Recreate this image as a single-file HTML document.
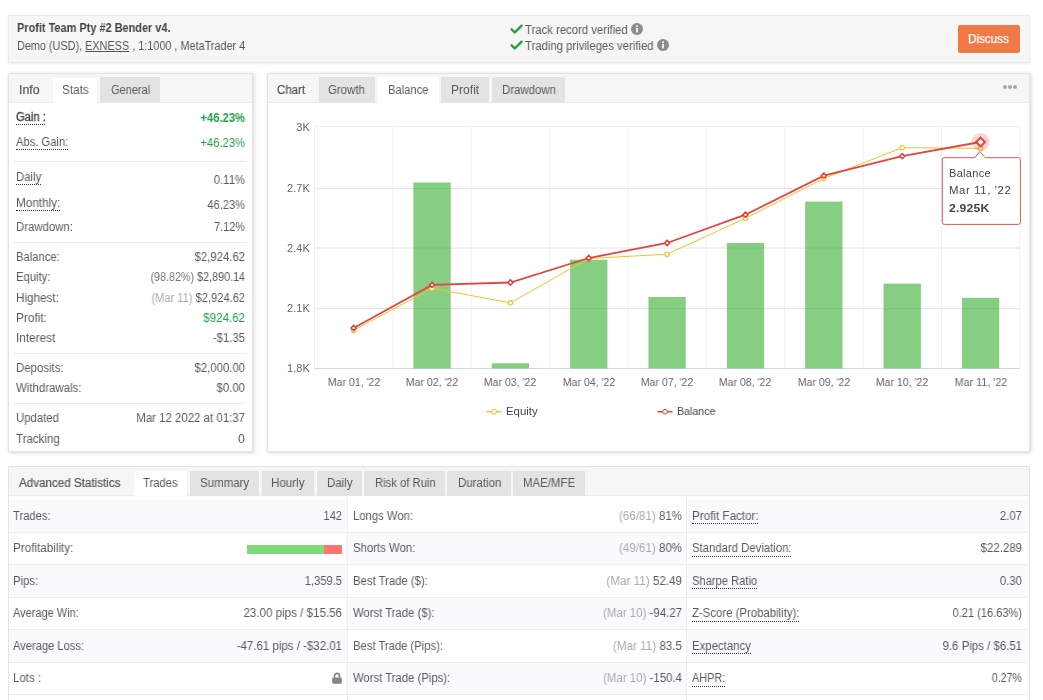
<!DOCTYPE html><html><head><meta charset="utf-8"><style>html,body{margin:0;padding:0;background:#fff;width:1043px;height:700px;overflow:hidden;position:relative}
.t{position:absolute;will-change:transform;font-family:"Liberation Sans",sans-serif;white-space:nowrap}
.r{position:absolute}
u{text-decoration:underline}
svg{display:block}
svg text{font-family:"Liberation Sans",sans-serif}</style></head><body>
<div class="r" style="left:8px;top:15px;width:1022.00px;height:48.00px;background:#f6f6f6;border:1px solid #ebebeb;box-sizing:border-box;box-shadow:0 1px 2px rgba(0,0,0,0.07);"></div>
<div class="t" style="top:22px;font-size:12px;line-height:12px;color:#444;font-weight:bold;left:17.3px;transform:scaleX(0.9109);transform-origin:left;"><span>Profit Team Pty #2 Bender v4.</span></div>
<div class="t" style="top:40px;font-size:12px;line-height:12px;color:#555;left:17.3px;transform:scaleX(0.9044);transform-origin:left;"><span>Demo (USD), <u>EXNESS</u> , 1:1000 , MetaTrader 4</span></div>
<div class="r" style="left:510px;top:24px;width:13px;height:11px"><svg width="13" height="11" viewBox="0 0 13 11"><path d="M1.6 5.3 L4.8 8.5 L11.6 1.7" fill="none" stroke="#1fa33a" stroke-width="2.4" stroke-linecap="round" stroke-linejoin="round"/></svg></div>
<div class="r" style="left:510px;top:40px;width:13px;height:11px"><svg width="13" height="11" viewBox="0 0 13 11"><path d="M1.6 5.3 L4.8 8.5 L11.6 1.7" fill="none" stroke="#1fa33a" stroke-width="2.4" stroke-linecap="round" stroke-linejoin="round"/></svg></div>
<div class="t" style="top:24px;font-size:12px;line-height:12px;color:#5a5a5a;left:525.4px;transform:scaleX(0.9429);transform-origin:left;"><span>Track record verified</span></div>
<div class="t" style="top:40px;font-size:12px;line-height:12px;color:#5a5a5a;left:525.4px;transform:scaleX(0.9435);transform-origin:left;"><span>Trading privileges verified</span></div>
<div class="r" style="left:631px;top:23px;width:12px;height:12px"><svg width="12" height="12" viewBox="0 0 12 12"><circle cx="6" cy="6" r="6" fill="#8c8c8c"/><rect x="5.1" y="5" width="1.8" height="4.5" fill="#f6f6f6"/><circle cx="6" cy="3.3" r="1" fill="#f6f6f6"/></svg></div>
<div class="r" style="left:657px;top:39px;width:12px;height:12px"><svg width="12" height="12" viewBox="0 0 12 12"><circle cx="6" cy="6" r="6" fill="#8c8c8c"/><rect x="5.1" y="5" width="1.8" height="4.5" fill="#f6f6f6"/><circle cx="6" cy="3.3" r="1" fill="#f6f6f6"/></svg></div>
<div class="r" style="left:958px;top:25px;width:61.50px;height:28.00px;background:#f07a46;border-radius:2px;"></div>
<div class="t" style="top:33px;font-size:12px;line-height:12px;color:#fff;-webkit-text-stroke:0.25px #fff;left:968.0px;transform:scaleX(0.9711);transform-origin:left;"><span>Discuss</span></div>
<div class="r" style="left:8px;top:73px;width:245.00px;height:379.00px;background:#fff;border:1px solid #e4e4e4;box-sizing:border-box;box-shadow:1px 1px 4px rgba(0,0,0,0.17);"></div>
<div class="r" style="left:9px;top:74px;width:243.00px;height:28.50px;background:#f6f6f6;border-bottom:1px solid #ececec;box-sizing:border-box;"></div>
<div class="r" style="left:52.6px;top:78px;width:44.90px;height:24.50px;background:#fff;"></div>
<div class="r" style="left:100px;top:77.3px;width:60.00px;height:25.20px;background:#e3e3e3;"></div>
<div class="t" style="top:84px;font-size:12px;line-height:12px;color:#555;-webkit-text-stroke:0.2px currentColor;left:18.5px;transform:scaleX(1.0342);transform-origin:left;"><span>Info</span></div>
<div class="t" style="top:84px;font-size:12px;line-height:12px;color:#5a5a5a;left:61.6px;transform:scaleX(0.9796);transform-origin:left;"><span>Stats</span></div>
<div class="t" style="top:84px;font-size:12px;line-height:12px;color:#5a5a5a;left:110.5px;transform:scaleX(0.9180);transform-origin:left;"><span>General</span></div>
<div class="t" style="top:111px;font-size:12px;line-height:12px;color:#444;-webkit-text-stroke:0.35px #444;left:15.8px;transform:scaleX(0.9308);transform-origin:left;"><span>Gain :</span></div>
<div class="r" style="left:16.3px;top:124.2px;width:28.70px;height:0;border-top:1px dotted #333"></div>
<div class="t" style="top:112px;font-size:12px;line-height:12px;color:#22a045;font-weight:bold;left:-355.20px;width:600px;text-align:right;transform:scaleX(0.9346);transform-origin:right;"><span>+46.23%</span></div>
<div class="t" style="top:136px;font-size:12px;line-height:12px;color:#5a5a5a;left:15.8px;transform:scaleX(0.9334);transform-origin:left;"><span>Abs. Gain:</span></div>
<div class="r" style="left:16.3px;top:148.5px;width:51.70px;height:0;border-top:1px dotted #333"></div>
<div class="t" style="top:137px;font-size:12px;line-height:12px;color:#22a045;left:-355.20px;width:600px;text-align:right;transform:scaleX(0.9346);transform-origin:right;"><span>+46.23%</span></div>
<div class="r" style="left:13.7px;top:161.2px;width:233.30px;height:1.00px;background:#ebebeb;"></div>
<div class="t" style="top:171px;font-size:12px;line-height:12px;color:#5a5a5a;left:15.8px;transform:scaleX(0.9448);transform-origin:left;"><span>Daily</span></div>
<div class="r" style="left:16.3px;top:183.8px;width:24.70px;height:0;border-top:1px dotted #333"></div>
<div class="t" style="top:174px;font-size:12px;line-height:12px;color:#5a5a5a;left:-355.20px;width:600px;text-align:right;transform:scaleX(0.9414);transform-origin:right;"><span>0.11%</span></div>
<div class="t" style="top:197px;font-size:12px;line-height:12px;color:#5a5a5a;left:15.8px;transform:scaleX(0.9788);transform-origin:left;"><span>Monthly:</span></div>
<div class="r" style="left:16.3px;top:209.5px;width:43.70px;height:0;border-top:1px dotted #333"></div>
<div class="t" style="top:199px;font-size:12px;line-height:12px;color:#5a5a5a;left:-355.20px;width:600px;text-align:right;transform:scaleX(0.9262);transform-origin:right;"><span>46.23%</span></div>
<div class="t" style="top:221px;font-size:12px;line-height:12px;color:#5a5a5a;left:15.8px;transform:scaleX(0.9478);transform-origin:left;"><span>Drawdown:</span></div>
<div class="t" style="top:221px;font-size:12px;line-height:12px;color:#5a5a5a;left:-355.20px;width:600px;text-align:right;transform:scaleX(0.9109);transform-origin:right;"><span>7.12%</span></div>
<div class="r" style="left:13.7px;top:241.8px;width:233.30px;height:1.00px;background:#ebebeb;"></div>
<div class="t" style="top:251px;font-size:12px;line-height:12px;color:#5a5a5a;left:15.8px;transform:scaleX(0.9357);transform-origin:left;"><span>Balance:</span></div>
<div class="t" style="top:251px;font-size:12px;line-height:12px;color:#5a5a5a;left:-355.20px;width:600px;text-align:right;transform:scaleX(0.9440);transform-origin:right;"><span>$2,924.62</span></div>
<div class="t" style="top:271px;font-size:12px;line-height:12px;color:#5a5a5a;left:15.8px;transform:scaleX(0.9404);transform-origin:left;"><span>Equity:</span></div>
<div class="t" style="top:271px;font-size:12px;line-height:12px;color:#5a5a5a;left:-355.20px;width:600px;text-align:right;transform:scaleX(0.8964);transform-origin:right;"><span><span style="color:#777">(98.82%)</span> $2,890.14</span></div>
<div class="t" style="top:292px;font-size:12px;line-height:12px;color:#5a5a5a;left:15.8px;transform:scaleX(0.9743);transform-origin:left;"><span>Highest:</span></div>
<div class="t" style="top:292px;font-size:12px;line-height:12px;color:#5a5a5a;left:-355.20px;width:600px;text-align:right;transform:scaleX(0.9242);transform-origin:right;"><span><span style="color:#aaa">(Mar 11)</span> $2,924.62</span></div>
<div class="t" style="top:312px;font-size:12px;line-height:12px;color:#5a5a5a;left:15.8px;transform:scaleX(0.9827);transform-origin:left;"><span>Profit:</span></div>
<div class="t" style="top:312px;font-size:12px;line-height:12px;color:#22a045;left:-355.20px;width:600px;text-align:right;transform:scaleX(0.9610);transform-origin:right;"><span>$924.62</span></div>
<div class="t" style="top:332px;font-size:12px;line-height:12px;color:#5a5a5a;left:15.8px;transform:scaleX(0.9817);transform-origin:left;"><span>Interest</span></div>
<div class="t" style="top:332px;font-size:12px;line-height:12px;color:#5a5a5a;left:-355.20px;width:600px;text-align:right;transform:scaleX(0.9462);transform-origin:right;"><span>-$1.35</span></div>
<div class="r" style="left:13.7px;top:353.2px;width:233.30px;height:1.00px;background:#ebebeb;"></div>
<div class="t" style="top:362px;font-size:12px;line-height:12px;color:#5a5a5a;left:15.8px;transform:scaleX(0.9514);transform-origin:left;"><span>Deposits:</span></div>
<div class="t" style="top:362px;font-size:12px;line-height:12px;color:#5a5a5a;left:-355.20px;width:600px;text-align:right;transform:scaleX(0.9459);transform-origin:right;"><span>$2,000.00</span></div>
<div class="t" style="top:382px;font-size:12px;line-height:12px;color:#5a5a5a;left:15.8px;transform:scaleX(0.9536);transform-origin:left;"><span>Withdrawals:</span></div>
<div class="t" style="top:382px;font-size:12px;line-height:12px;color:#5a5a5a;left:-355.20px;width:600px;text-align:right;transform:scaleX(0.9490);transform-origin:right;"><span>$0.00</span></div>
<div class="r" style="left:13.7px;top:402.8px;width:233.30px;height:1.00px;background:#ebebeb;"></div>
<div class="t" style="top:412px;font-size:12px;line-height:12px;color:#5a5a5a;left:15.8px;transform:scaleX(0.9455);transform-origin:left;"><span>Updated</span></div>
<div class="t" style="top:412px;font-size:12px;line-height:12px;color:#5a5a5a;left:-355.20px;width:600px;text-align:right;transform:scaleX(0.9536);transform-origin:right;"><span>Mar 12 2022 at 01:37</span></div>
<div class="t" style="top:433px;font-size:12px;line-height:12px;color:#5a5a5a;left:15.8px;transform:scaleX(0.9588);transform-origin:left;"><span>Tracking</span></div>
<div class="t" style="top:433px;font-size:12px;line-height:12px;color:#5a5a5a;left:-355.20px;width:600px;text-align:right;transform:scaleX(1.0318);transform-origin:right;"><span>0</span></div>
<div class="r" style="left:267px;top:73px;width:763.00px;height:379.00px;background:#fff;border:1px solid #e4e4e4;box-sizing:border-box;box-shadow:1px 1px 4px rgba(0,0,0,0.17);"></div>
<div class="r" style="left:268px;top:74px;width:761.00px;height:28.50px;background:#f6f6f6;border-bottom:1px solid #ececec;box-sizing:border-box;"></div>
<div class="r" style="left:319px;top:77px;width:56.20px;height:25.50px;background:#e3e3e3;"></div>
<div class="r" style="left:378px;top:77px;width:60.50px;height:25.50px;background:#fff;"></div>
<div class="r" style="left:441px;top:77px;width:48.20px;height:25.50px;background:#e3e3e3;"></div>
<div class="r" style="left:491.8px;top:77px;width:73.60px;height:25.50px;background:#e3e3e3;"></div>
<div class="t" style="top:84px;font-size:12px;line-height:12px;color:#555;-webkit-text-stroke:0.2px currentColor;left:277.3px;transform:scaleX(0.9576);transform-origin:left;"><span>Chart</span></div>
<div class="t" style="top:84px;font-size:12px;line-height:12px;color:#5a5a5a;left:328.1px;transform:scaleX(0.9538);transform-origin:left;"><span>Growth</span></div>
<div class="t" style="top:84px;font-size:12px;line-height:12px;color:#5a5a5a;left:388.2px;transform:scaleX(0.9314);transform-origin:left;"><span>Balance</span></div>
<div class="t" style="top:84px;font-size:12px;line-height:12px;color:#5a5a5a;left:450.8px;transform:scaleX(1.0066);transform-origin:left;"><span>Profit</span></div>
<div class="t" style="top:84px;font-size:12px;line-height:12px;color:#5a5a5a;left:501.6px;transform:scaleX(0.9506);transform-origin:left;"><span>Drawdown</span></div>
<div class="r" style="left:1002.6px;top:84.8px;width:4px;height:4px;border-radius:2px;background:#a5a5a5"></div>
<div class="r" style="left:1007.6px;top:84.8px;width:4px;height:4px;border-radius:2px;background:#a5a5a5"></div>
<div class="r" style="left:1012.6px;top:84.8px;width:4px;height:4px;border-radius:2px;background:#a5a5a5"></div>
<svg class="r" style="left:0;top:0" width="1043" height="700" viewBox="0 0 1043 700"><line x1="314.5" y1="126.5" x2="1019.7" y2="126.5" stroke="#f0f0f0" stroke-width="1"/><line x1="314.5" y1="188.5" x2="1019.7" y2="188.5" stroke="#f0f0f0" stroke-width="1"/><line x1="314.5" y1="248" x2="1019.7" y2="248" stroke="#f0f0f0" stroke-width="1"/><line x1="314.5" y1="308.5" x2="1019.7" y2="308.5" stroke="#f0f0f0" stroke-width="1"/><line x1="314.50" y1="126.5" x2="314.50" y2="368.5" stroke="#f0f0f0" stroke-width="1"/><line x1="392.86" y1="126.5" x2="392.86" y2="368.5" stroke="#f0f0f0" stroke-width="1"/><line x1="471.22" y1="126.5" x2="471.22" y2="368.5" stroke="#f0f0f0" stroke-width="1"/><line x1="549.58" y1="126.5" x2="549.58" y2="368.5" stroke="#f0f0f0" stroke-width="1"/><line x1="627.94" y1="126.5" x2="627.94" y2="368.5" stroke="#f0f0f0" stroke-width="1"/><line x1="706.30" y1="126.5" x2="706.30" y2="368.5" stroke="#f0f0f0" stroke-width="1"/><line x1="784.66" y1="126.5" x2="784.66" y2="368.5" stroke="#f0f0f0" stroke-width="1"/><line x1="863.02" y1="126.5" x2="863.02" y2="368.5" stroke="#f0f0f0" stroke-width="1"/><line x1="941.38" y1="126.5" x2="941.38" y2="368.5" stroke="#f0f0f0" stroke-width="1"/><line x1="1019.74" y1="126.5" x2="1019.74" y2="368.5" stroke="#f0f0f0" stroke-width="1"/><line x1="314.5" y1="368.5" x2="1019.7" y2="368.5" stroke="#ccd6eb" stroke-width="1"/><rect x="413.39" y="182.5" width="37.3" height="186.0" fill="#86ce81"/><rect x="491.75" y="363.3" width="37.3" height="5.2" fill="#86ce81"/><rect x="570.11" y="259.7" width="37.3" height="108.8" fill="#86ce81"/><rect x="648.47" y="297" width="37.3" height="71.5" fill="#86ce81"/><rect x="726.83" y="243" width="37.3" height="125.5" fill="#86ce81"/><rect x="805.19" y="201.6" width="37.3" height="166.9" fill="#86ce81"/><rect x="883.55" y="283.6" width="37.3" height="84.9" fill="#86ce81"/><rect x="961.91" y="297.8" width="37.3" height="70.7" fill="#86ce81"/><line x1="314.5" y1="188.5" x2="1019.7" y2="188.5" stroke="rgba(0,0,0,0.05)" stroke-width="1"/><line x1="314.5" y1="248" x2="1019.7" y2="248" stroke="rgba(0,0,0,0.05)" stroke-width="1"/><line x1="314.5" y1="308.5" x2="1019.7" y2="308.5" stroke="rgba(0,0,0,0.05)" stroke-width="1"/><polyline points="353.68,330.4 432.04,288.3 510.40,302.8 588.76,258.5 667.12,254.2 745.48,218.3 823.84,178.5 902.20,147.7 980.56,148.4" fill="none" stroke="#f5c02b" stroke-width="1"/><circle cx="353.68" cy="330.4" r="2.2" fill="#fff" stroke="#f5c02b" stroke-width="1.2"/><circle cx="432.04" cy="288.3" r="2.2" fill="#fff" stroke="#f5c02b" stroke-width="1.2"/><circle cx="510.40" cy="302.8" r="2.2" fill="#fff" stroke="#f5c02b" stroke-width="1.2"/><circle cx="588.76" cy="258.5" r="2.2" fill="#fff" stroke="#f5c02b" stroke-width="1.2"/><circle cx="667.12" cy="254.2" r="2.2" fill="#fff" stroke="#f5c02b" stroke-width="1.2"/><circle cx="745.48" cy="218.3" r="2.2" fill="#fff" stroke="#f5c02b" stroke-width="1.2"/><circle cx="823.84" cy="178.5" r="2.2" fill="#fff" stroke="#f5c02b" stroke-width="1.2"/><circle cx="902.20" cy="147.7" r="2.2" fill="#fff" stroke="#f5c02b" stroke-width="1.2"/><circle cx="980.56" cy="148.4" r="2.2" fill="#fff" stroke="#f5c02b" stroke-width="1.2"/><polyline points="353.68,328 432.04,284.9 510.40,282.5 588.76,258 667.12,243 745.48,214.7 823.84,175.7 902.20,156.2 980.56,142" fill="none" stroke="#e2463f" stroke-width="1.8"/><path d="M353.68 325.40 L356.28 328 L353.68 330.60 L351.08 328 Z" fill="#fff" stroke="#e0433b" stroke-width="1.5"/><path d="M432.04 282.30 L434.64 284.9 L432.04 287.50 L429.44 284.9 Z" fill="#fff" stroke="#e0433b" stroke-width="1.5"/><path d="M510.40 279.90 L513.00 282.5 L510.40 285.10 L507.80 282.5 Z" fill="#fff" stroke="#e0433b" stroke-width="1.5"/><path d="M588.76 255.40 L591.36 258 L588.76 260.60 L586.16 258 Z" fill="#fff" stroke="#e0433b" stroke-width="1.5"/><path d="M667.12 240.40 L669.72 243 L667.12 245.60 L664.52 243 Z" fill="#fff" stroke="#e0433b" stroke-width="1.5"/><path d="M745.48 212.10 L748.08 214.7 L745.48 217.30 L742.88 214.7 Z" fill="#fff" stroke="#e0433b" stroke-width="1.5"/><path d="M823.84 173.10 L826.44 175.7 L823.84 178.30 L821.24 175.7 Z" fill="#fff" stroke="#e0433b" stroke-width="1.5"/><path d="M902.20 153.60 L904.80 156.2 L902.20 158.80 L899.60 156.2 Z" fill="#fff" stroke="#e0433b" stroke-width="1.5"/><circle cx="980.56" cy="142" r="9" fill="rgba(224,67,59,0.22)"/><path d="M980.56 137.6 L984.96 142 L980.56 146.4 L976.16 142 Z" fill="#fff" stroke="#e0433b" stroke-width="2"/><path d="M944.3 157.7 L974.8 157.7 L979.5 151.7 L985.3 157.7 L1018.4 157.7 Q1020.4 157.7 1020.4 159.7 L1020.4 222.4 Q1020.4 224.4 1018.4 224.4 L944.3 224.4 Q942.3 224.4 942.3 222.4 L942.3 159.7 Q942.3 157.7 944.3 157.7 Z" fill="rgba(255,255,255,0.95)" stroke="#e0574f" stroke-width="1"/></svg>
<div class="t" style="top:122px;font-size:11px;line-height:11px;color:#666;letter-spacing:0.1px;left:-290.30px;width:600px;text-align:right;"><span>3K</span></div>
<div class="t" style="top:183px;font-size:11px;line-height:11px;color:#666;letter-spacing:0.1px;left:-290.30px;width:600px;text-align:right;"><span>2.7K</span></div>
<div class="t" style="top:243px;font-size:11px;line-height:11px;color:#666;letter-spacing:0.1px;left:-290.30px;width:600px;text-align:right;"><span>2.4K</span></div>
<div class="t" style="top:303px;font-size:11px;line-height:11px;color:#666;letter-spacing:0.1px;left:-290.30px;width:600px;text-align:right;"><span>2.1K</span></div>
<div class="t" style="top:363px;font-size:11px;line-height:11px;color:#666;letter-spacing:0.1px;left:-290.30px;width:600px;text-align:right;"><span>1.8K</span></div>
<div class="t" style="top:377px;font-size:11px;line-height:11px;color:#666;left:53.68px;width:600px;text-align:center;transform:scaleX(0.9600);transform-origin:center;"><span>Mar 01, '22</span></div>
<div class="t" style="top:377px;font-size:11px;line-height:11px;color:#666;left:132.04px;width:600px;text-align:center;transform:scaleX(0.9600);transform-origin:center;"><span>Mar 02, '22</span></div>
<div class="t" style="top:377px;font-size:11px;line-height:11px;color:#666;left:210.40px;width:600px;text-align:center;transform:scaleX(0.9600);transform-origin:center;"><span>Mar 03, '22</span></div>
<div class="t" style="top:377px;font-size:11px;line-height:11px;color:#666;left:288.76px;width:600px;text-align:center;transform:scaleX(0.9600);transform-origin:center;"><span>Mar 04, '22</span></div>
<div class="t" style="top:377px;font-size:11px;line-height:11px;color:#666;left:367.12px;width:600px;text-align:center;transform:scaleX(0.9600);transform-origin:center;"><span>Mar 07, '22</span></div>
<div class="t" style="top:377px;font-size:11px;line-height:11px;color:#666;left:445.48px;width:600px;text-align:center;transform:scaleX(0.9600);transform-origin:center;"><span>Mar 08, '22</span></div>
<div class="t" style="top:377px;font-size:11px;line-height:11px;color:#666;left:523.84px;width:600px;text-align:center;transform:scaleX(0.9600);transform-origin:center;"><span>Mar 09, '22</span></div>
<div class="t" style="top:377px;font-size:11px;line-height:11px;color:#666;left:602.20px;width:600px;text-align:center;transform:scaleX(0.9600);transform-origin:center;"><span>Mar 10, '22</span></div>
<div class="t" style="top:377px;font-size:11px;line-height:11px;color:#666;left:680.56px;width:600px;text-align:center;transform:scaleX(0.9745);transform-origin:center;"><span>Mar 11, '22</span></div>
<svg class="r" style="left:486px;top:406px" width="16" height="12"><line x1="0.5" y1="5.7" x2="15.5" y2="5.7" stroke="#f5c02b" stroke-width="1.5"/><circle cx="8" cy="5.7" r="2.5" fill="#fff" stroke="#f5c02b" stroke-width="1"/></svg>
<div class="t" style="top:406px;font-size:11px;line-height:11px;color:#444;left:506.3px;transform:scaleX(1.0367);transform-origin:left;"><span>Equity</span></div>
<svg class="r" style="left:657px;top:406px" width="16" height="12"><line x1="0.5" y1="5.7" x2="15.5" y2="5.7" stroke="#e0433b" stroke-width="1.5"/><circle cx="8" cy="5.7" r="2.3" fill="#fff" stroke="#e0433b" stroke-width="1"/></svg>
<div class="t" style="top:406px;font-size:11px;line-height:11px;color:#444;left:677.1px;transform:scaleX(0.9631);transform-origin:left;"><span>Balance</span></div>
<div class="t" style="top:168px;font-size:11px;line-height:11px;color:#444;letter-spacing:0.3px;left:949.2px;transform:scaleX(0.9890);transform-origin:left;"><span>Balance</span></div>
<div class="t" style="top:185px;font-size:11px;line-height:11px;color:#444;letter-spacing:0.6px;left:949.2px;transform:scaleX(1.0336);transform-origin:left;"><span>Mar 11, '22</span></div>
<div class="t" style="top:203px;font-size:11px;line-height:11px;color:#444;letter-spacing:0.2px;font-weight:bold;left:949.2px;transform:scaleX(1.1071);transform-origin:left;"><span>2.925K</span></div>
<div class="r" style="left:8px;top:466px;width:1022.00px;height:294.00px;background:#fff;border:1px solid #e4e4e4;box-sizing:border-box;"></div>
<div class="r" style="left:9px;top:467px;width:1020.00px;height:29.00px;background:#f6f6f6;border-bottom:1px solid #ececec;box-sizing:border-box;"></div>
<div class="t" style="top:477px;font-size:12px;line-height:12px;color:#555;-webkit-text-stroke:0.2px currentColor;left:19.0px;transform:scaleX(0.9683);transform-origin:left;"><span>Advanced Statistics</span></div>
<div class="r" style="left:134.2px;top:471px;width:52.80px;height:25.00px;background:#fff;"></div>
<div class="t" style="top:477px;font-size:12px;line-height:12px;color:#5a5a5a;left:143.1px;transform:scaleX(0.9348);transform-origin:left;"><span>Trades</span></div>
<div class="r" style="left:190.3px;top:471px;width:69.10px;height:25.00px;background:#e3e3e3;"></div>
<div class="t" style="top:477px;font-size:12px;line-height:12px;color:#5a5a5a;left:200.2px;transform:scaleX(0.9582);transform-origin:left;"><span>Summary</span></div>
<div class="r" style="left:261.7px;top:471px;width:52.80px;height:25.00px;background:#e3e3e3;"></div>
<div class="t" style="top:477px;font-size:12px;line-height:12px;color:#5a5a5a;left:271.3px;transform:scaleX(0.9658);transform-origin:left;"><span>Hourly</span></div>
<div class="r" style="left:316.9px;top:471px;width:45.40px;height:25.00px;background:#e3e3e3;"></div>
<div class="t" style="top:477px;font-size:12px;line-height:12px;color:#5a5a5a;left:327.1px;transform:scaleX(0.9561);transform-origin:left;"><span>Daily</span></div>
<div class="r" style="left:363.8px;top:471px;width:81.00px;height:25.00px;background:#e3e3e3;"></div>
<div class="t" style="top:477px;font-size:12px;line-height:12px;color:#5a5a5a;left:374.7px;transform:scaleX(0.9384);transform-origin:left;"><span>Risk of Ruin</span></div>
<div class="r" style="left:446.7px;top:471px;width:64.40px;height:25.00px;background:#e3e3e3;"></div>
<div class="t" style="top:477px;font-size:12px;line-height:12px;color:#5a5a5a;left:457.5px;transform:scaleX(0.9546);transform-origin:left;"><span>Duration</span></div>
<div class="r" style="left:513.3px;top:471px;width:72.10px;height:25.00px;background:#e3e3e3;"></div>
<div class="t" style="top:477px;font-size:12px;line-height:12px;color:#5a5a5a;left:522.9px;transform:scaleX(0.9530);transform-origin:left;"><span>MAE/MFE</span></div>
<div class="r" style="left:9px;top:500.0px;width:338.60px;height:32.58px;background:#f8fafc;border-bottom:1px solid #ebeef0;box-sizing:border-box;"></div>
<div class="t" style="top:510px;font-size:12px;line-height:12px;color:#5a5a5a;left:13.2px;transform:scaleX(0.9317);transform-origin:left;"><span>Trades:</span></div>
<div class="t" style="top:510px;font-size:12px;line-height:12px;color:#5a5a5a;left:-257.80px;width:600px;text-align:right;transform:scaleX(0.9285);transform-origin:right;"><span>142</span></div>
<div class="r" style="left:9px;top:532.58px;width:338.60px;height:32.58px;background:#fff;border-bottom:1px solid #ebeef0;box-sizing:border-box;"></div>
<div class="t" style="top:542px;font-size:12px;line-height:12px;color:#5a5a5a;left:13.2px;transform:scaleX(0.9721);transform-origin:left;"><span>Profitability:</span></div>
<div class="r" style="left:247px;top:545px;width:77.20px;height:9.00px;background:#80d97a;"></div>
<div class="r" style="left:324.2px;top:545px;width:18.00px;height:9.00px;background:#fb7575;"></div>
<div class="r" style="left:9px;top:565.16px;width:338.60px;height:32.58px;background:#f8fafc;border-bottom:1px solid #ebeef0;box-sizing:border-box;"></div>
<div class="t" style="top:575px;font-size:12px;line-height:12px;color:#5a5a5a;left:13.2px;transform:scaleX(0.9443);transform-origin:left;"><span>Pips:</span></div>
<div class="t" style="top:575px;font-size:12px;line-height:12px;color:#5a5a5a;left:-257.80px;width:600px;text-align:right;transform:scaleX(0.9314);transform-origin:right;"><span>1,359.5</span></div>
<div class="r" style="left:9px;top:597.74px;width:338.60px;height:32.58px;background:#fff;border-bottom:1px solid #ebeef0;box-sizing:border-box;"></div>
<div class="t" style="top:607px;font-size:12px;line-height:12px;color:#5a5a5a;left:13.2px;transform:scaleX(0.9163);transform-origin:left;"><span>Average Win:</span></div>
<div class="t" style="top:607px;font-size:12px;line-height:12px;color:#5a5a5a;left:-257.80px;width:600px;text-align:right;transform:scaleX(0.9648);transform-origin:right;"><span>23.00 pips / $15.56</span></div>
<div class="r" style="left:9px;top:630.3199999999999px;width:338.60px;height:32.58px;background:#f8fafc;border-bottom:1px solid #ebeef0;box-sizing:border-box;"></div>
<div class="t" style="top:640px;font-size:12px;line-height:12px;color:#5a5a5a;left:13.2px;transform:scaleX(0.9268);transform-origin:left;"><span>Average Loss:</span></div>
<div class="t" style="top:640px;font-size:12px;line-height:12px;color:#5a5a5a;left:-257.80px;width:600px;text-align:right;transform:scaleX(0.9566);transform-origin:right;"><span>-47.61 pips / -$32.01</span></div>
<div class="r" style="left:9px;top:662.9px;width:338.60px;height:32.58px;background:#fff;border-bottom:1px solid #ebeef0;box-sizing:border-box;"></div>
<div class="t" style="top:672px;font-size:12px;line-height:12px;color:#5a5a5a;left:13.2px;transform:scaleX(0.9571);transform-origin:left;"><span>Lots :</span></div>
<svg class="r" style="left:332px;top:672px" width="11" height="12" viewBox="0 0 11 12"><path d="M2.5 5.8 V3.9 A2.5 2.5 0 0 1 7.5 3.9 V5.8" fill="none" stroke="#858585" stroke-width="1.7"/><rect x="0.2" y="5.6" width="9.6" height="6.2" rx="1" fill="#858585"/></svg>
<div class="r" style="left:347.6px;top:500.0px;width:338.90px;height:32.58px;background:#fff;border-bottom:1px solid #ebeef0;box-sizing:border-box;"></div>
<div class="t" style="top:510px;font-size:12px;line-height:12px;color:#5a5a5a;left:352.5px;transform:scaleX(0.9400);transform-origin:left;"><span>Longs Won:</span></div>
<div class="t" style="top:510px;font-size:12px;line-height:12px;color:#5a5a5a;left:81.90px;width:600px;text-align:right;transform:scaleX(0.9619);transform-origin:right;"><span><span style="color:#aaa">(66/81)</span> 81%</span></div>
<div class="r" style="left:347.6px;top:532.58px;width:338.90px;height:32.58px;background:#f8fafc;border-bottom:1px solid #ebeef0;box-sizing:border-box;"></div>
<div class="t" style="top:542px;font-size:12px;line-height:12px;color:#5a5a5a;left:352.5px;transform:scaleX(0.9466);transform-origin:left;"><span>Shorts Won:</span></div>
<div class="t" style="top:542px;font-size:12px;line-height:12px;color:#5a5a5a;left:81.90px;width:600px;text-align:right;transform:scaleX(0.9619);transform-origin:right;"><span><span style="color:#aaa">(49/61)</span> 80%</span></div>
<div class="r" style="left:347.6px;top:565.16px;width:338.90px;height:32.58px;background:#fff;border-bottom:1px solid #ebeef0;box-sizing:border-box;"></div>
<div class="t" style="top:575px;font-size:12px;line-height:12px;color:#5a5a5a;left:352.5px;transform:scaleX(0.9436);transform-origin:left;"><span>Best Trade ($):</span></div>
<div class="t" style="top:575px;font-size:12px;line-height:12px;color:#5a5a5a;left:81.90px;width:600px;text-align:right;transform:scaleX(0.9727);transform-origin:right;"><span><span style="color:#aaa">(Mar 11)</span> 52.49</span></div>
<div class="r" style="left:347.6px;top:597.74px;width:338.90px;height:32.58px;background:#f8fafc;border-bottom:1px solid #ebeef0;box-sizing:border-box;"></div>
<div class="t" style="top:607px;font-size:12px;line-height:12px;color:#5a5a5a;left:352.5px;transform:scaleX(0.9425);transform-origin:left;"><span>Worst Trade ($):</span></div>
<div class="t" style="top:607px;font-size:12px;line-height:12px;color:#5a5a5a;left:81.90px;width:600px;text-align:right;transform:scaleX(0.9540);transform-origin:right;"><span><span style="color:#aaa">(Mar 10)</span> -94.27</span></div>
<div class="r" style="left:347.6px;top:630.3199999999999px;width:338.90px;height:32.58px;background:#fff;border-bottom:1px solid #ebeef0;box-sizing:border-box;"></div>
<div class="t" style="top:640px;font-size:12px;line-height:12px;color:#5a5a5a;left:352.5px;transform:scaleX(0.9370);transform-origin:left;"><span>Best Trade (Pips):</span></div>
<div class="t" style="top:640px;font-size:12px;line-height:12px;color:#5a5a5a;left:81.90px;width:600px;text-align:right;transform:scaleX(0.9683);transform-origin:right;"><span><span style="color:#aaa">(Mar 11)</span> 83.5</span></div>
<div class="r" style="left:347.6px;top:662.9px;width:338.90px;height:32.58px;background:#f8fafc;border-bottom:1px solid #ebeef0;box-sizing:border-box;"></div>
<div class="t" style="top:672px;font-size:12px;line-height:12px;color:#5a5a5a;left:352.5px;transform:scaleX(0.9424);transform-origin:left;"><span>Worst Trade (Pips):</span></div>
<div class="t" style="top:672px;font-size:12px;line-height:12px;color:#5a5a5a;left:81.90px;width:600px;text-align:right;transform:scaleX(0.9540);transform-origin:right;"><span><span style="color:#aaa">(Mar 10)</span> -150.4</span></div>
<div class="r" style="left:686.5px;top:500.0px;width:340.50px;height:32.58px;background:#f8fafc;border-bottom:1px solid #ebeef0;box-sizing:border-box;"></div>
<div class="t" style="top:510px;font-size:12px;line-height:12px;color:#5a5a5a;left:691.6px;transform:scaleX(0.9711);transform-origin:left;"><span>Profit Factor:</span></div>
<div class="r" style="left:692.1px;top:523.4px;width:66.30px;height:0;border-top:1px dotted #333"></div>
<div class="t" style="top:510px;font-size:12px;line-height:12px;color:#5a5a5a;left:421.90px;width:600px;text-align:right;transform:scaleX(0.9546);transform-origin:right;"><span>2.07</span></div>
<div class="r" style="left:686.5px;top:532.58px;width:340.50px;height:32.58px;background:#fff;border-bottom:1px solid #ebeef0;box-sizing:border-box;"></div>
<div class="t" style="top:542px;font-size:12px;line-height:12px;color:#5a5a5a;left:691.6px;transform:scaleX(0.9440);transform-origin:left;"><span>Standard Deviation:</span></div>
<div class="r" style="left:692.1px;top:555.85px;width:99.10px;height:0;border-top:1px dotted #333"></div>
<div class="t" style="top:542px;font-size:12px;line-height:12px;color:#5a5a5a;left:421.90px;width:600px;text-align:right;transform:scaleX(0.9541);transform-origin:right;"><span>$22.289</span></div>
<div class="r" style="left:686.5px;top:565.16px;width:340.50px;height:32.58px;background:#f8fafc;border-bottom:1px solid #ebeef0;box-sizing:border-box;"></div>
<div class="t" style="top:575px;font-size:12px;line-height:12px;color:#5a5a5a;left:691.6px;transform:scaleX(0.9308);transform-origin:left;"><span>Sharpe Ratio</span></div>
<div class="r" style="left:692.1px;top:588.3px;width:64.80px;height:0;border-top:1px dotted #333"></div>
<div class="t" style="top:575px;font-size:12px;line-height:12px;color:#5a5a5a;left:421.90px;width:600px;text-align:right;transform:scaleX(0.9546);transform-origin:right;"><span>0.30</span></div>
<div class="r" style="left:686.5px;top:597.74px;width:340.50px;height:32.58px;background:#fff;border-bottom:1px solid #ebeef0;box-sizing:border-box;"></div>
<div class="t" style="top:607px;font-size:12px;line-height:12px;color:#5a5a5a;left:691.6px;transform:scaleX(0.9482);transform-origin:left;"><span>Z-Score (Probability):</span></div>
<div class="r" style="left:692.1px;top:620.75px;width:107.10px;height:0;border-top:1px dotted #333"></div>
<div class="t" style="top:607px;font-size:12px;line-height:12px;color:#5a5a5a;left:421.90px;width:600px;text-align:right;transform:scaleX(0.9205);transform-origin:right;"><span>0.21 (16.63%)</span></div>
<div class="r" style="left:686.5px;top:630.3199999999999px;width:340.50px;height:32.58px;background:#f8fafc;border-bottom:1px solid #ebeef0;box-sizing:border-box;"></div>
<div class="t" style="top:640px;font-size:12px;line-height:12px;color:#5a5a5a;left:691.6px;transform:scaleX(0.9493);transform-origin:left;"><span>Expectancy</span></div>
<div class="r" style="left:692.1px;top:653.1999999999999px;width:58.50px;height:0;border-top:1px dotted #333"></div>
<div class="t" style="top:640px;font-size:12px;line-height:12px;color:#5a5a5a;left:421.90px;width:600px;text-align:right;transform:scaleX(0.9521);transform-origin:right;"><span>9.6 Pips / $6.51</span></div>
<div class="r" style="left:686.5px;top:662.9px;width:340.50px;height:32.58px;background:#fff;border-bottom:1px solid #ebeef0;box-sizing:border-box;"></div>
<div class="t" style="top:672px;font-size:12px;line-height:12px;color:#5a5a5a;left:691.6px;transform:scaleX(0.9049);transform-origin:left;"><span>AHPR:</span></div>
<div class="r" style="left:692.1px;top:685.65px;width:32.80px;height:0;border-top:1px dotted #333"></div>
<div class="t" style="top:672px;font-size:12px;line-height:12px;color:#5a5a5a;left:421.90px;width:600px;text-align:right;transform:scaleX(0.8904);transform-origin:right;"><span>0.27%</span></div>
<div class="r" style="left:347.1px;top:497px;width:1.00px;height:263.00px;background:#eceef0;"></div>
<div class="r" style="left:686px;top:497px;width:1.00px;height:263.00px;background:#eceef0;"></div>
</body></html>
